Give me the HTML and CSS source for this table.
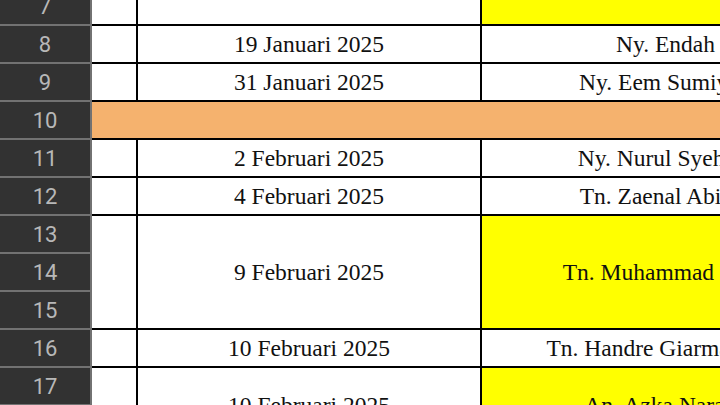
FILE: index.html
```html
<!DOCTYPE html>
<html>
<head>
<meta charset="utf-8">
<link rel="stylesheet" href="styles.css">
</head>
<body>
<div class="viewport">
  <div class="sheet">
    <div class="rh">7</div><div class="c a"></div><div class="c b"></div><div class="c n yellow"></div>
    <div class="rh">8</div><div class="c a"></div><div class="c b">19 Januari 2025</div><div class="c n">Ny. Endah</div>
    <div class="rh">9</div><div class="c a"></div><div class="c b">31 Januari 2025</div><div class="c n">Ny. Eem Sumiyati</div>
    <div class="rh">10</div><div class="c wide orange"></div>
    <div class="rh">11</div><div class="c a"></div><div class="c b">2 Februari 2025</div><div class="c n">Ny. Nurul Syehani</div>
    <div class="rh">12</div><div class="c a"></div><div class="c b">4 Februari 2025</div><div class="c n">Tn. Zaenal Abidin</div>
    <div class="rh">13</div><div class="c a span3"></div><div class="c b span3">9 Februari 2025</div><div class="c n span3 yellow">Tn. Muhammad Rafif</div>
    <div class="rh">14</div>
    <div class="rh">15</div>
    <div class="rh">16</div><div class="c a"></div><div class="c b">10 Februari 2025</div><div class="c n">Tn. Handre Giarmansyah</div>
    <div class="rh">17</div><div class="c a span2"></div><div class="c b span2">10 Februari 2025</div><div class="c n span2 yellow">An. Azka Naraya</div>
    <div class="rh">18</div>
  </div>
</div>
</body>
</html>
```
FILE: styles.css
```css
html, body {
  margin: 0;
  padding: 0;
  background: #ffffff;
}
.viewport {
  width: 720px;
  height: 405px;
  overflow: hidden;
}
.sheet {
  display: grid;
  grid-template-columns: 92px 46px 344px 369px;
  grid-auto-rows: 38px;
  margin-top: -12px;
  width: 851px;
}
.rh {
  background: #323232;
  color: #b8b8b8;
  font-family: Roboto, "Noto Sans", sans-serif;
  font-size: 22px;
  border-right: 2px solid #727272;
  border-bottom: 2px solid #727272;
  display: flex;
  align-items: center;
  justify-content: center;
}
.c {
  border-right: 2px solid #000;
  border-bottom: 2px solid #000;
  background: #fff;
  color: #111;
  font-family: "Liberation Serif", "Times New Roman", serif;
  font-size: 23.5px;
  display: flex;
  align-items: center;
  justify-content: center;
  white-space: nowrap;
  overflow: hidden;
}
.span3 { grid-row: span 3; }
.span2 { grid-row: span 2; }
.wide { grid-column: span 3; border-right: none; }
.yellow { background: #ffff00; }
.orange { background: #f5b26e; }
```
